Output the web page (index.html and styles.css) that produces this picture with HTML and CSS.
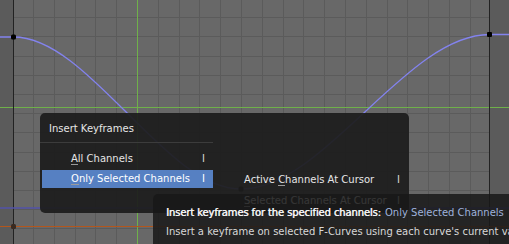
FILE: index.html
```html
<!DOCTYPE html>
<html lang="en">
  <head>
    <meta charset="UTF-8" />
    <title>Graph Editor - Insert Keyframes</title>
    <link rel="stylesheet" href="styles.css">
  </head>
  <body>
    <div class="editor">
      <svg class="graph" width="509" height="244" viewBox="0 0 509 244">
        <rect x="0" y="0" width="13" height="244" fill="#5b5b5b" />
        <rect x="490" y="0" width="19" height="244" fill="#5b5b5b" />
        <g id="grid" stroke="#5b5b5b" stroke-width="1"></g>
        <line x1="0" y1="107.5" x2="509" y2="107.5" stroke="#6fb04a" />
        <line x1="137.5" y1="0" x2="137.5" y2="244" stroke="#6fb04a" />
        <line x1="13.5" y1="0" x2="13.5" y2="244" stroke="#222" />
        <line x1="489.5" y1="0" x2="489.5" y2="244" stroke="#222" />
        <line x1="0" y1="208" x2="509" y2="208" stroke="#5252a8" stroke-width="1.4" />
        <line x1="0" y1="226.5" x2="509" y2="226.5" stroke="#b3561c" stroke-width="1.2" />
        <path d="M0 37 L13.5 37 C89 37 165 189 241 189 C324 189 406 34.5 489.5 34.5 L509 34.5"
              fill="none" stroke="#8383ee" stroke-width="1.3" />
        <rect x="11" y="34.5" width="5" height="5" rx="1.5" fill="#000" />
        <rect x="487" y="32" width="5" height="5" rx="1" fill="#000" />
        <rect x="238.5" y="186.5" width="5" height="5" rx="1.5" fill="#000" />
        <rect x="11" y="224" width="5" height="5" rx="1.5" fill="#3a2a20" />
      </svg>

      <div class="menu">
        <div class="menu-title">Insert Keyframes</div>
        <div class="menu-body">
          <div class="menu-col first">
            <div class="item"><span class="label"><u>A</u>ll Channels</span><span class="key">I</span></div>
            <div class="item active"><span class="label"><u>O</u>nly Selected Channels</span><span class="key">I</span></div>
          </div>
          <div class="menu-col second">
            <div class="item"><span class="label">Active <u>C</u>hannels At Cursor</span><span class="key">I</span></div>
            <div class="item"><span class="label"><u>S</u>elected Channels At Cursor</span><span class="key">I</span></div>
          </div>
        </div>
      </div>

      <div class="tooltip">
        <div class="tip-head"><span class="tip-name">Insert keyframes for the specified channels:</span> <span class="tip-value">Only Selected Channels</span></div>
        <div class="tip-desc">Insert a keyframe on selected F-Curves using each curve's current value</div>
      </div>
    </div>

    <script>
      const grid = document.getElementById("grid");
      const ns = "http://www.w3.org/2000/svg";

      // vertical grid lines
      for (let k = 0; k < 23; k++) {
        const x = Math.round(33 + k * 20.8) + 0.5;
        const l = document.createElementNS(ns, "line");
        l.setAttribute("x1", x); l.setAttribute("x2", x);
        l.setAttribute("y1", 0); l.setAttribute("y2", 244);
        grid.appendChild(l);
      }

      // horizontal grid lines
      for (let k = 0; k < 13; k++) {
        const y = Math.round(-2 + k * 19.2) + 0.5;
        const l = document.createElementNS(ns, "line");
        l.setAttribute("x1", 0); l.setAttribute("x2", 509);
        l.setAttribute("y1", y); l.setAttribute("y2", y);
        grid.appendChild(l);
      }
    </script>
  </body>
</html>
```

FILE: styles.css
```css
body {
  margin: 0;
  background: #686868;
  font-family: "DejaVu Sans", Verdana, sans-serif;
  font-size: 10px;
  overflow: hidden;
}

.editor {
  position: relative;
  width: 509px;
  height: 244px;
  overflow: hidden;
  background: #686868;
}

.graph {
  display: block;
}

u {
  text-decoration: none;
  border-bottom: 1px solid #9a9a9a;
  line-height: 1;
}

.menu {
  position: absolute;
  left: 40px;
  top: 113px;
  width: 369px;
  height: 100px;
  background: rgba(29, 29, 29, 0.93);
  border-radius: 5px;
  color: #e6e6e6;
}

.menu-title {
  height: 29px;
  line-height: 31px;
  padding-left: 9px;
  margin-right: 196px;
  border-bottom: 1px solid #3c3c3c;
}

.menu-body {
  display: grid;
  grid-template-columns: 171px 196px;
  padding-left: 2px;
}

.menu-col.first {
  padding-top: 5px;
}

.menu-col.second {
  padding-top: 26px;
}

.item {
  display: flex;
  justify-content: space-between;
  height: 21px;
  line-height: 21px;
}

.item .label {
  padding-left: 29px;
}

.item .key {
  color: #d6d6d6;
  padding-right: 8px;
}

.second .item .label {
  padding-left: 31px;
}

.second .item .key {
  padding-right: 9px;
}

.item.active {
  background: #5680c2;
  color: #fff;
  height: 18px;
  line-height: 18px;
  margin-top: 1px;
}

.item.active .key {
  color: #fff;
}

.tooltip {
  position: absolute;
  left: 153px;
  top: 194px;
  width: 400px;
  height: 60px;
  background: rgba(24, 24, 24, 0.86);
  border-radius: 5px;
  padding: 11px 13px;
  box-sizing: border-box;
  color: #d8d8d8;
  white-space: nowrap;
}

.tip-head {
  line-height: 16px;
}

.tip-name {
  color: #f4f4f4;
  letter-spacing: -0.12px;
  text-shadow: 0.45px 0 0 #f4f4f4;
}

.tip-value {
  color: #9fb2dc;
  padding-left: 1px;
}

.tip-desc {
  margin-top: 3px;
  line-height: 16px;
}
```
